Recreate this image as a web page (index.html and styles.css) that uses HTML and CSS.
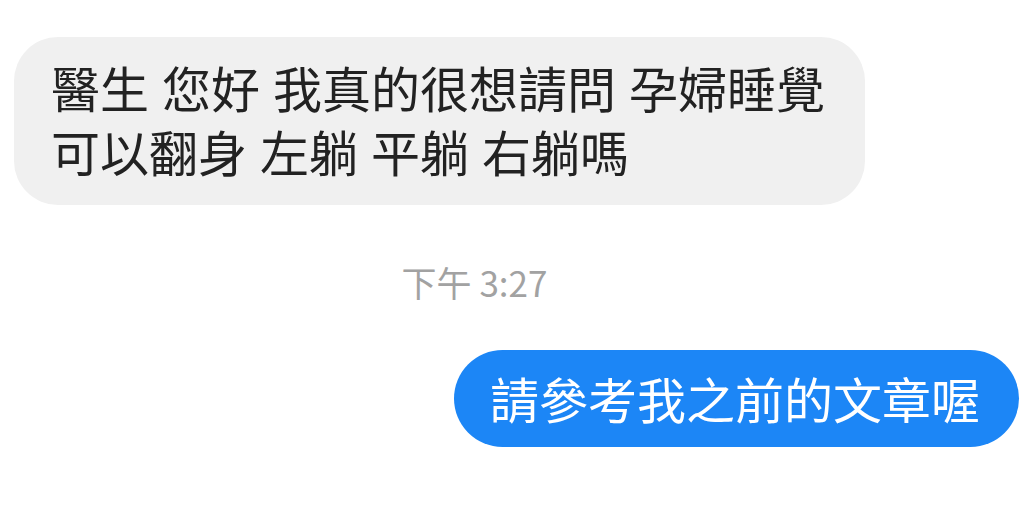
FILE: index.html
```html
<!DOCTYPE html>
<html lang="zh-Hant">
<head>
    <meta charset="UTF-8">
    <meta name="viewport" content="width=device-width, initial-scale=1.0">
    <title>對話</title>
    <link rel="stylesheet" href="styles.css">
</head>
<body>

    <div class="chat">
        <!-- 對方訊息 -->
        <div class="row row-in">
            <div class="bubble bubble-in">醫生 您好 我真的很想請問 孕婦睡覺<br>可以翻身 左躺 平躺 右躺嗎</div>
        </div>

        <div class="time">下午 3:27</div>

        <!-- 自己的訊息 -->
        <div class="row row-out">
            <div class="bubble bubble-out">請參考我之前的文章喔</div>
        </div>
    </div>

</body>
</html>
```

FILE: styles.css
```css
body {
    margin: 0;
    background: #fff;
    font-family: "Noto Sans CJK TC", "Noto Sans", sans-serif;
}

.chat {
    padding: 37px 5px 0 14px;
}

.row {
    display: flex;
}

.row-out {
    justify-content: flex-end;
}

.bubble {
    font-size: 49px;
    line-height: 64px;
    word-spacing: 2px;
}

/* 灰色泡泡 */
.bubble-in {
    background-color: #f0f0f0;
    color: #222;
    padding: 18px 40px 22px 37px;
    border-radius: 44px;
}

/* 藍色泡泡 */
.bubble-out {
    background-color: #1c86f6;
    color: #fff;
    padding: 16px 39px 17px 36px;
    border-radius: 49px;
}

.time {
    margin: 57px 0 48px;
    padding-right: 84px;
    text-align: center;
    font-size: 35px;
    line-height: 40px;
    color: #a2a2a2;
}
```
